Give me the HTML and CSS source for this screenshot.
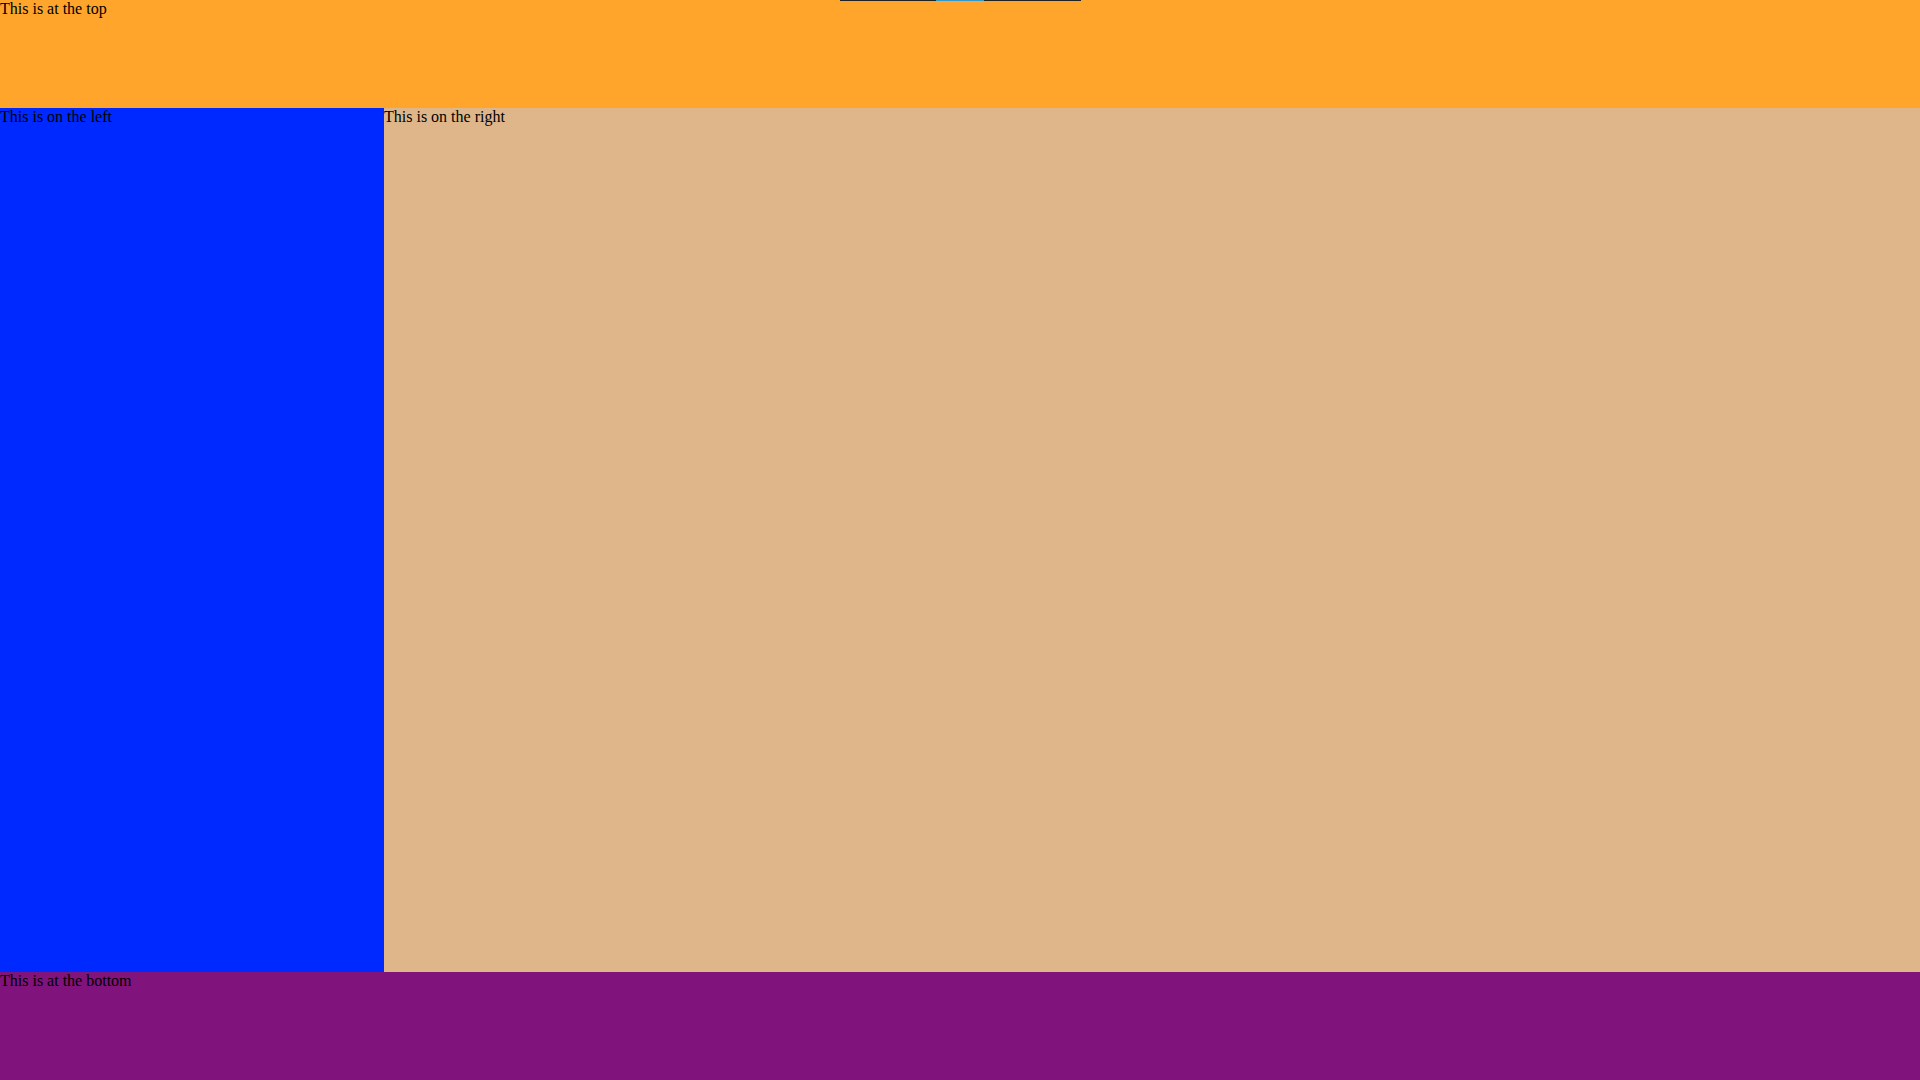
FILE: index.html
```html
<!DOCTYPE html>
<html>
<head>
<meta charset="utf-8">
<link rel="stylesheet" href="styles.css">
</head>
<body>
<div class="page">
  <header class="top">This is at the top
    <div class="progress"><div class="progress-fill"></div></div>
  </header>
  <aside class="left">This is on the left</aside>
  <main class="right">This is on the right</main>
  <footer class="bottom">This is at the bottom</footer>
</div>
</body>
</html>
```
FILE: styles.css
```css
html, body {
  margin: 0;
  padding: 0;
}
body {
  font-family: "Liberation Serif", "Times New Roman", serif;
  font-size: 16px;
  color: #000;
}
.page {
  display: grid;
  grid-template-columns: 384px 1fr;
  grid-template-rows: 108px 864px 108px;
  width: 1920px;
  height: 1080px;
}
.top {
  grid-column: 1 / 3;
  background: #ffa52b;
  position: relative;
}
.left {
  background: #0029ff;
}
.right {
  background: #dfb68a;
}
.bottom {
  grid-column: 1 / 3;
  background: #80137c;
}
.progress {
  position: absolute;
  top: 0;
  left: 840px;
  width: 241px;
  height: 1px;
  background: #222;
}
.progress-fill {
  position: absolute;
  top: 0;
  left: 96px;
  width: 48px;
  height: 1px;
  background: #3399cc;
}
```
